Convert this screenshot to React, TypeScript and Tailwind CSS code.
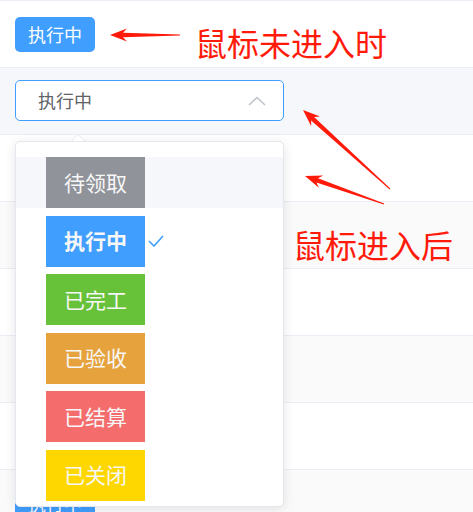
import React from "react";

type Status = { label: string; bg: string };

const statuses: Status[] = [
  { label: "待领取", bg: "bg-[#909399]" },
  { label: "执行中", bg: "bg-[#409eff]" },
  { label: "已完工", bg: "bg-[#67c23a]" },
  { label: "已验收", bg: "bg-[#e6a23c]" },
  { label: "已结算", bg: "bg-[#f56c6c]" },
  { label: "已关闭", bg: "bg-[#ffd700]" },
];

const rowBgs = [
  "bg-white",
  "bg-[#f5f7fa]",
  "bg-white",
  "bg-[#fafafa]",
  "bg-white",
  "bg-[#fafafa]",
  "bg-white",
  "bg-[#fafafa]",
];

// tapered arrow polygon from tail to tip
function arrowPoints(tx: number, ty: number, hx: number, hy: number) {
  const len = Math.hypot(hx - tx, hy - ty);
  const dx = (hx - tx) / len;
  const dy = (hy - ty) / len;
  const nx = -dy;
  const ny = dx;
  const L = 17;
  const W = 6.5;
  const bx = hx - dx * L;
  const by = hy - dy * L;
  const ix = hx - dx * (L - 4);
  const iy = hy - dy * (L - 4);
  const pts = [
    [hx, hy],
    [bx + nx * W, by + ny * W],
    [ix + nx * 2.2, iy + ny * 2.2],
    [tx + nx * 0.5, ty + ny * 0.5],
    [tx - nx * 0.5, ty - ny * 0.5],
    [ix - nx * 2.2, iy - ny * 2.2],
    [bx - nx * W, by - ny * W],
  ];
  return pts.map((p) => `${p[0].toFixed(1)},${p[1].toFixed(1)}`).join(" ");
}

function Tag() {
  return (
    <div className="flex h-[35px] w-[80px] items-center justify-center rounded-[5px] bg-[#409eff] text-[18px] text-white">
      执行中
    </div>
  );
}

export default function App() {
  return (
    <div
      className="relative h-[512px] w-full overflow-hidden bg-white"
      style={{ fontFamily: '"Noto Sans CJK SC", "Noto Sans", sans-serif' }}
    >
      {/* table rows */}
      <div className="border-t border-[#ebeef5]">
        {rowBgs.map((bg, i) => (
          <div
            key={i}
            className={`h-[67px] border-b border-[#ebeef5] px-[15px] ${bg} ${
              i === 1 ? "pt-[12px]" : "pt-[16px]"
            }`}
          >
            {i === 1 ? (
              <div className="flex h-[41px] w-[269px] items-center justify-between rounded-[5px] border border-[#409eff] bg-white pl-[22px] pr-[17px]">
                <span className="text-[18px] text-[#606266]">执行中</span>
                <svg width="18" height="10" viewBox="0 0 18 10" fill="none">
                  <path d="M1 9 L9 1.5 L17 9" stroke="#c0c4cc" strokeWidth="1.6" />
                </svg>
              </div>
            ) : i === 0 || i === 7 ? (
              <Tag />
            ) : null}
          </div>
        ))}
      </div>

      {/* dropdown */}
      <div className="absolute left-[15px] top-[141px] w-[269px]">
        <div className="absolute -top-[7px] left-[56px] h-0 w-0 border-x-[7px] border-b-[7px] border-x-transparent border-b-[#e4e7ed]" />
        <div className="absolute -top-[6px] left-[57px] h-0 w-0 border-x-[6px] border-b-[6px] border-x-transparent border-b-white" />
        <div className="h-[366px] overflow-hidden rounded-[5px] border border-[#e4e7ed] bg-white pt-[15px] shadow-[0_2px_12px_rgba(0,0,0,0.1)]">
          <div className="flex flex-col gap-[7.5px]">
            {statuses.map((s, i) => (
              <div
                key={s.label}
                className={`flex h-[51px] items-center pl-[30px] ${i === 0 ? "bg-[#f5f7fa]" : ""}`}
              >
                <div
                  className={`flex h-[51px] w-[99px] items-center justify-center text-[21px] text-[#f7f7f7] ${s.bg} ${
                    i === 1 ? "font-bold" : ""
                  }`}
                >
                  {s.label}
                </div>
                {i === 1 && (
                  <svg className="ml-[3px]" width="16" height="12" viewBox="0 0 16 12" fill="none">
                    <path d="M1 6 L6 11 L15 1" stroke="#409eff" strokeWidth="1.6" />
                  </svg>
                )}
              </div>
            ))}
          </div>
        </div>
      </div>

      {/* annotations */}
      <svg className="pointer-events-none absolute left-0 top-0" width="473" height="512">
        <polygon points={arrowPoints(180, 35, 110, 35)} fill="#ff1a0a" />
        <polygon points={arrowPoints(390, 189, 303, 110)} fill="#ff1a0a" />
        <polygon points={arrowPoints(384, 204, 305, 176)} fill="#ff1a0a" />
      </svg>
      <div className="absolute left-[195px] top-[20px] text-[32px] leading-[44px] text-[#ff1a0a]">
        鼠标未进入时
      </div>
      <div className="absolute left-[293px] top-[222px] text-[32px] leading-[44px] text-[#ff1a0a]">
        鼠标进入后
      </div>
    </div>
  );
}
